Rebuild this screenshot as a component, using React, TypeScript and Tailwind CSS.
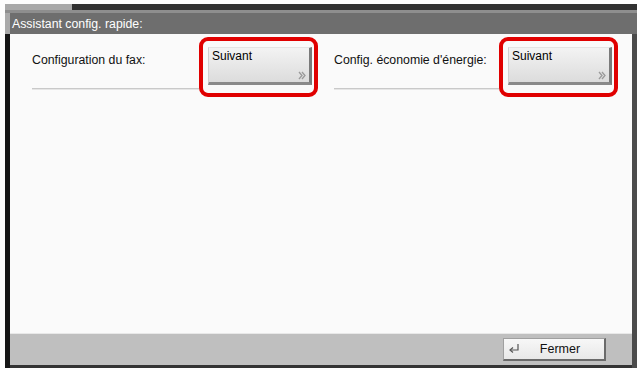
import React from 'react';

const font = { fontFamily: '"Liberation Sans", Arial, sans-serif' };

function NextButton() {
  return (
    <div className="w-[119px] h-[60px] rounded-[9px] border-[4px] border-[#e00000] pt-[6px] pl-[5px]">
      <div className="relative w-[104px] h-[38px] bg-gradient-to-b from-[#f3f3f3] to-[#dcdcdc] border-l border-t border-l-[#d0d0d0] border-t-[#e4e4e4] border-r-[3px] border-r-[#7a7a7a] border-b-[3px] border-b-[#8a8a8a]">
        <span className="absolute left-[3px] top-[1px] text-[12px] text-black leading-[14px]">Suivant</span>
        <svg className="absolute right-[3px] bottom-[2px]" width="8" height="9" viewBox="0 0 8 9">
          <path d="M1 1 L4 4.5 L1 8 M4 1 L7 4.5 L4 8" fill="none" stroke="#9a9a9a" strokeWidth="1.3" />
        </svg>
      </div>
    </div>
  );
}

function Row({ label, labelWidth }: { label: string; labelWidth: string }) {
  return (
    <div className="flex">
      <div className={`${labelWidth} flex flex-col`}>
        <span className="mt-[16px] text-[12.3px] leading-[14px] text-[#111]">{label}</span>
        <div className="mt-[21px] h-[2px] bg-[#c9c9c9] border-b border-[#e6e6e6]" />
      </div>
      <NextButton />
    </div>
  );
}

export default function App() {
  return (
    <div className="w-[640px] h-[370px] bg-[#fdfdfd] flex flex-col pt-[4px] pb-[2px] overflow-hidden" style={font}>
      {/* Title */}
      <div className="ml-[5px] mr-[3px]">
        <div className="flex h-[6px]">
          <div className="w-[67px] bg-[#a8a8a8]" />
          <div className="flex-1 bg-[#303030]" />
        </div>
        <div className="h-[3px] bg-[#8e8e8e]" />
        <div className="h-[21px] border-l-[5px] border-[#a9a9a9] bg-[#6e6e6e] flex items-center pl-[2px]">
          <span className="text-[12.3px] text-white leading-[14px]">Assistant config. rapide:</span>
        </div>
      </div>

      {/* Body */}
      <div className="flex-1 ml-[5px] mr-[3px] flex flex-col border-l-[5px] border-l-[#151515] border-r-[5px] border-r-[#4a4a4a]">
        <div className="flex-1 bg-[#fafafa] pt-[3px] pl-[22px] flex gap-[16px]">
          <Row label="Configuration du fax:" labelWidth="w-[167px]" />
          <Row label="Config. économie d'énergie:" labelWidth="w-[165px]" />
        </div>
        <div className="h-[35px] bg-[#bfbfbf] border-t border-[#e8e8e8] border-b-[3px] border-b-[#333] flex items-center justify-end pr-[26px]">
          <div className="w-[103px] h-[23px] mb-[1px] flex items-center bg-gradient-to-b from-[#f7f7f7] to-[#e8e8e8] border-l border-t border-[#a0a0a0] border-r-[2px] border-b-[2px] border-r-[#6a6a6a] border-b-[#6a6a6a]">
            <svg className="ml-[4px]" width="12" height="11" viewBox="0 0 12 11">
              <path d="M10 1 V7 H2.5" fill="none" stroke="#555" strokeWidth="1.2" />
              <path d="M5 4.5 L2 7 L5 9.5" fill="none" stroke="#555" strokeWidth="1.2" />
            </svg>
            <span className="flex-1 text-center pr-[4px] text-[12.5px] text-[#111] leading-[14px]">Fermer</span>
          </div>
        </div>
      </div>
    </div>
  );
}
